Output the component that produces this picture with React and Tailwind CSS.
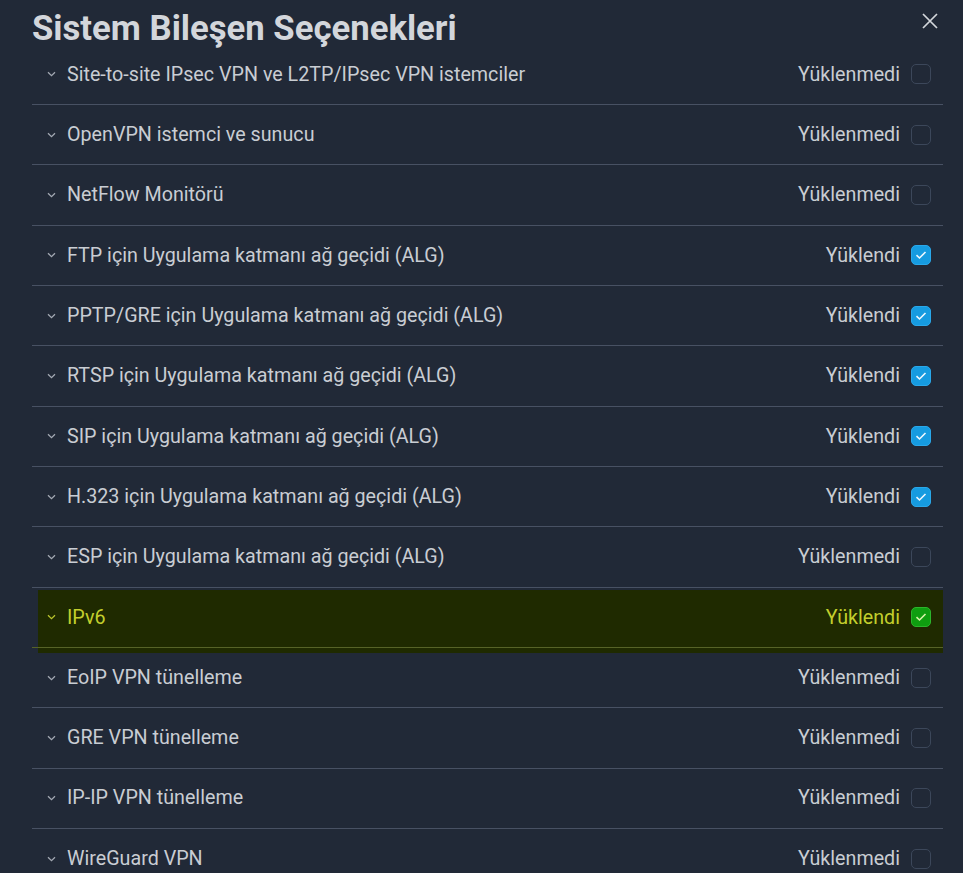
import React from "react";

const rows = [
  { label: "Site-to-site IPsec VPN ve L2TP/IPsec VPN istemciler", on: false },
  { label: "OpenVPN istemci ve sunucu", on: false },
  { label: "NetFlow Monitörü", on: false },
  { label: "FTP için Uygulama katmanı ağ geçidi (ALG)", on: true },
  { label: "PPTP/GRE için Uygulama katmanı ağ geçidi (ALG)", on: true },
  { label: "RTSP için Uygulama katmanı ağ geçidi (ALG)", on: true },
  { label: "SIP için Uygulama katmanı ağ geçidi (ALG)", on: true },
  { label: "H.323 için Uygulama katmanı ağ geçidi (ALG)", on: true },
  { label: "ESP için Uygulama katmanı ağ geçidi (ALG)", on: false },
  { label: "IPv6", on: true, hl: true },
  { label: "EoIP VPN tünelleme", on: false },
  { label: "GRE VPN tünelleme", on: false },
  { label: "IP-IP VPN tünelleme", on: false },
  { label: "WireGuard VPN", on: false },
];

function Chevron({ className }) {
  return (
    <svg width="9" height="6" viewBox="0 0 9 6" className={className} fill="none">
      <path d="M1 1.2 L4.5 4.6 L8 1.2" stroke="currentColor" strokeWidth="1.3" />
    </svg>
  );
}

function Check({ color }) {
  return (
    <svg width="12" height="10" viewBox="0 0 12 10" fill="none">
      <path d="M1.5 5.2 L4.5 8 L10.5 2" stroke={color} strokeWidth="1.6" />
    </svg>
  );
}

function Row({ label, on, hl }) {
  return (
    <div className="relative h-[60.33px] border-b border-[#485163] flex items-center pl-[15px] pr-[12px]">
      {hl && (
        <div className="absolute left-[6px] right-0 top-[2px] bottom-[-6px] bg-[#1f2a00]">
          <div className="absolute left-[-6px] right-0 bottom-[5px] h-px bg-[#566327]" />
        </div>
      )}
      <Chevron className={"relative " + (hl ? "text-[#b9c42c]" : "text-[#a3a9b3]")} />
      <span
        className={
          "relative ml-[11px] flex-1 text-[19.7px] " +
          (hl ? "text-[#c3cf2d]" : "text-[#c9cdd3]")
        }
      >
        {label}
      </span>
      <span
        className={
          "relative text-[19.7px] mr-[11px] " +
          (hl ? "text-[#c3cf2d]" : "text-[#c9cdd3]")
        }
      >
        {on ? "Yüklendi" : "Yüklenmedi"}
      </span>
      {on ? (
        hl ? (
          <span className="relative w-[20px] h-[20px] rounded-[5px] bg-[#0f9e10] border border-[#2cb52c] flex items-center justify-center">
            <Check color="#d8f5a8" />
          </span>
        ) : (
          <span className="relative w-[20px] h-[20px] rounded-[5px] bg-[#169be0] border border-[#2aa8ea] flex items-center justify-center">
            <Check color="#eef8ff" />
          </span>
        )
      ) : (
        <span className="relative w-[20px] h-[20px] rounded-[5px] border border-[#3c475a]" />
      )}
    </div>
  );
}

export default function App() {
  return (
    <div
      className="w-[963px] h-[873px] overflow-hidden bg-[#212937] pl-[32px] pr-[20px]"
      style={{ fontFamily: "Roboto, 'Noto Sans', sans-serif" }}
    >
      <div className="h-[44.67px] flex justify-between items-start">
        <h1 className="pt-[11px] text-[34.7px] leading-none font-bold text-[#d3d6db]">
          Sistem Bileşen Seçenekleri
        </h1>
        <svg width="16" height="16" viewBox="0 0 16 16" className="mt-[13px] mr-[5px]" fill="none">
          <path d="M1 1 L15 15 M15 1 L1 15" stroke="#d3d6db" strokeWidth="1.7" />
        </svg>
      </div>
      {rows.map((r) => (
        <Row key={r.label} {...r} />
      ))}
    </div>
  );
}
